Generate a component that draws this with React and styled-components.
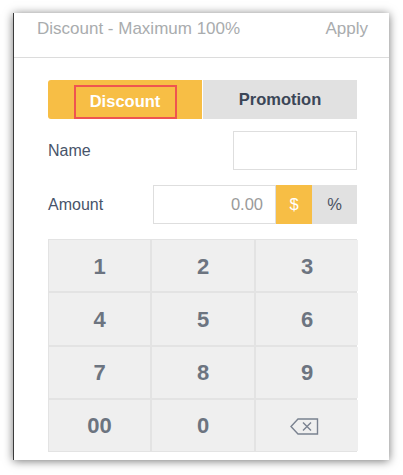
import styled, { createGlobalStyle } from 'styled-components';

const GlobalStyle = createGlobalStyle`
  body {
    margin: 0;
    background: #ffffff;
    font-family: "Liberation Sans", Arial, sans-serif;
  }
`;

const Page = styled.div`
  padding: 13px 14px 15px 13px;
`;

const Panel = styled.div`
  width: 375px;
  height: 447px;
  background: #ffffff;
  border-left: 1px solid #3a3a3a;
  box-shadow: 0 1px 9px rgba(0, 0, 0, 0.55);
  display: flex;
  flex-direction: column;
`;

const Header = styled.div`
  box-sizing: border-box;
  height: 45px;
  border-bottom: 1px solid #dcdcdc;
  display: flex;
  align-items: flex-start;
  justify-content: space-between;
  padding: 6px 21px 0 23px;
  line-height: 20px;
  color: #a9acae;
  font-size: 17px;
`;

const Body = styled.div`
  padding: 22px 32px 0 34px;
  display: flex;
  flex-direction: column;
`;

const Tabs = styled.div`
  display: flex;
  height: 39px;
  gap: 1px;
`;

const Tab = styled.div`
  flex: 1;
  display: flex;
  align-items: center;
  justify-content: center;
  font-weight: bold;
  font-size: 16.5px;
  background: ${(p) => (p.active ? '#f7be45' : '#e1e1e1')};
  color: ${(p) => (p.active ? '#ffffff' : '#3b4657')};
  border-radius: ${(p) => (p.active ? '3px 0 0 3px' : '0')};
`;

const Highlight = styled.span`
  display: flex;
  align-items: center;
  justify-content: center;
  width: 99px;
  height: 30px;
  margin-top: 4px;
  border: 2px solid #ef5450;
`;

const Row = styled.div`
  display: flex;
  align-items: center;
  justify-content: space-between;
  height: 39px;
  margin-top: ${(p) => p.top}px;
`;

const Label = styled.div`
  font-size: 16px;
  color: #48546a;
`;

const TextBox = styled.div`
  box-sizing: border-box;
  width: ${(p) => p.w}px;
  height: 39px;
  border: 1px solid #dedede;
  display: flex;
  align-items: center;
  justify-content: flex-end;
  padding-right: 12px;
  color: #9a9a9a;
  font-size: 16.5px;
`;

const Group = styled.div`
  display: flex;
`;

const Unit = styled.div`
  width: ${(p) => p.w}px;
  height: 39px;
  display: flex;
  align-items: center;
  justify-content: center;
  font-size: 16.5px;
  background: ${(p) => (p.active ? '#f7be45' : '#e1e1e1')};
  color: ${(p) => (p.active ? '#ffffff' : '#4a5262')};
`;

const Keypad = styled.div`
  margin-top: 15px;
  height: 211px;
  display: grid;
  grid-template-columns: 101px 102px 102px;
  grid-template-rows: repeat(4, 1fr);
  gap: 2px;
  padding: 1px;
  background: #e3e3e3;
`;

const Key = styled.div`
  background: #efefef;
  display: flex;
  align-items: center;
  justify-content: center;
  padding-top: 2px;
  padding-right: ${(p) => (p.icon ? 6 : 0)}px;
  font-weight: bold;
  font-size: 22px;
  color: #6c7480;
`;

function BackspaceIcon() {
  return (
    <svg width="29" height="17" viewBox="0 0 29 17" fill="none" stroke="#7a8290" strokeWidth="1.4">
      <path d="M8 1 H27.5 V16 H8 L1 8.5 Z" />
      <path d="M13 4.5 L21 12.5 M21 4.5 L13 12.5" />
    </svg>
  );
}

const keys = ['1', '2', '3', '4', '5', '6', '7', '8', '9', '00', '0'];

export default function App() {
  return (
    <Page>
      <GlobalStyle />
      <Panel>
        <Header>
          <span>Discount - Maximum 100%</span>
          <span>Apply</span>
        </Header>
        <Body>
          <Tabs>
            <Tab active>
              <Highlight>Discount</Highlight>
            </Tab>
            <Tab>Promotion</Tab>
          </Tabs>
          <Row top={12}>
            <Label>Name</Label>
            <TextBox w={124} />
          </Row>
          <Row top={15}>
            <Label>Amount</Label>
            <Group>
              <TextBox w={123}>0.00</TextBox>
              <Unit w={36} active>$</Unit>
              <Unit w={45}>%</Unit>
            </Group>
          </Row>
          <Keypad>
            {keys.map((k) => (
              <Key key={k}>{k}</Key>
            ))}
            <Key icon>
              <BackspaceIcon />
            </Key>
          </Keypad>
        </Body>
      </Panel>
    </Page>
  );
}
